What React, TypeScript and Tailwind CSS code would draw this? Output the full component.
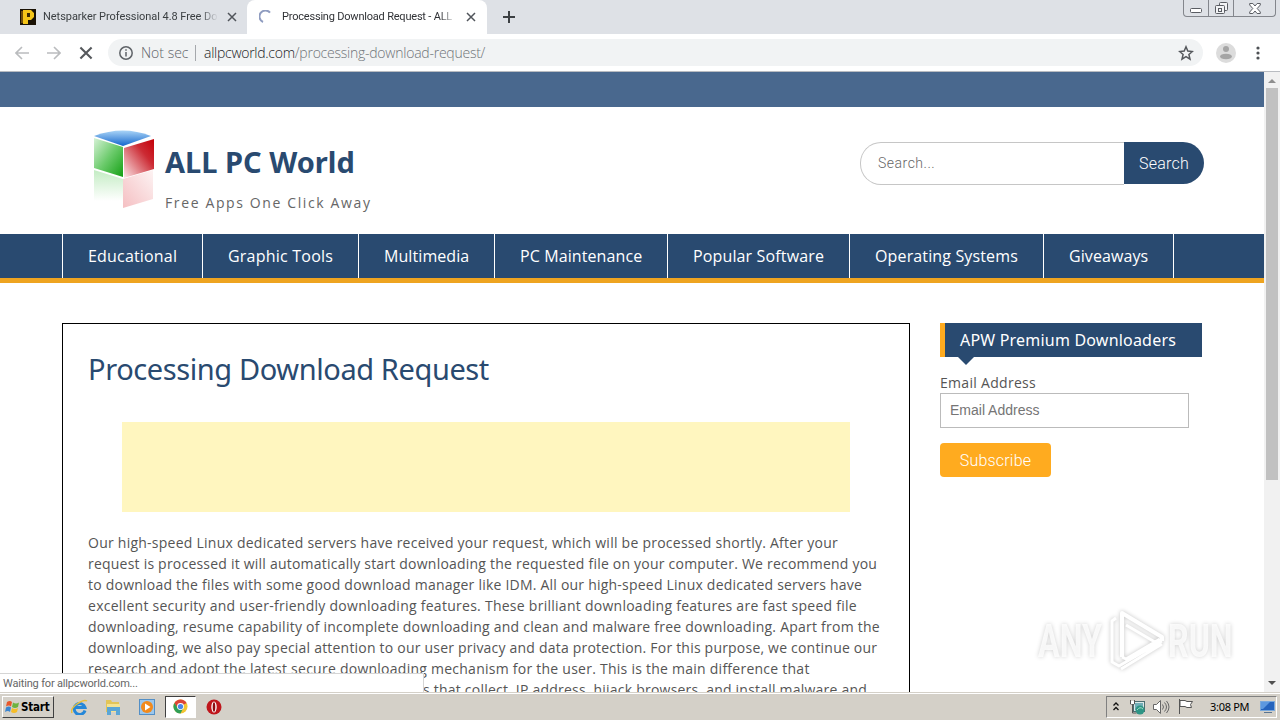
const navItems = [
  { label: "Educational", width: "w-[140px]", tracking: "tracking-[0.18px]" },
  { label: "Graphic Tools", width: "w-[156px]", tracking: "tracking-[0.22px]" },
  { label: "Multimedia", width: "w-[136px]", tracking: "tracking-[0.08px]" },
  { label: "PC Maintenance", width: "w-[173px]", tracking: "tracking-[0.1px]" },
  { label: "Popular Software", width: "w-[182px]", tracking: "tracking-[0.14px]" },
  { label: "Operating Systems", width: "w-[194px]", tracking: "tracking-[0.14px]" },
  { label: "Giveaways", width: "w-[130px]", tracking: "tracking-[0.08px]" },
];

const lines = [
  { text: "Our high-speed Linux dedicated servers have received your request, which will be processed shortly. After your", cls: "tracking-[0.245px]" },
  { text: "request is processed it will automatically start downloading the requested file on your computer. We recommend you", cls: "tracking-[0.217px]" },
  { text: "to download the files with some good download manager like IDM. All our high-speed Linux dedicated servers have", cls: "tracking-[0.22px]" },
  { text: "excellent security and user-friendly downloading features. These brilliant downloading features are fast speed file", cls: "tracking-[0.265px]" },
  { text: "downloading, resume capability of incomplete downloading and clean and malware free downloading. Apart from the", cls: "tracking-[0.238px]" },
  { text: "downloading, we also pay special attention to our user privacy and data protection. For this purpose, we continue our", cls: "tracking-[0.206px]" },
  { text: "research and adopt the latest secure downloading mechanism for the user. This is the main difference that", cls: "tracking-[0.25px]" },
];

function CloseIcon({ className }: { className: string }) {
  return (
    <svg viewBox="0 0 10 10" className={className} fill="none" stroke="currentColor">
      <path d="M1 1l8 8M9 1l-8 8" strokeWidth="1.5" />
    </svg>
  );
}

function TabStrip() {
  return (
    <div className="flex h-[34px] bg-[#dee1e6] font-['Roboto',sans-serif] text-[11px] text-[#3c4043]">
      <div className="flex h-[34px] w-[247px] items-center pl-5">
        <svg width="16" height="16" viewBox="0 0 16 16" className="shrink-0">
          <rect width="16" height="16" fill="#1a1205" />
          <path d="M3 1h8l3 3v4l-3 3H8v4H3V1z" fill="#f5c518" />
          <path d="M7 4h3v4H7z" fill="#3a2a05" />
          <path d="M2 2v12" stroke="#c98a10" />
        </svg>
        <div className="ml-[7px] w-[175px] overflow-hidden whitespace-nowrap tracking-[-0.05px] [mask-image:linear-gradient(to_right,black_90%,transparent)]">
          Netsparker Professional 4.8 Free Do
        </div>
        <CloseIcon className="ml-[9px] size-[10px] text-[#50545a]" />
      </div>
      <div className="flex h-[34px] w-[240px] items-center rounded-t-lg bg-white pl-3">
        <svg width="14" height="14" viewBox="0 0 14 14" fill="none" className="shrink-0">
          <path d="M4 12A6 6 0 1 1 11 2.6" stroke="#8f9cc0" strokeWidth="2" />
        </svg>
        <div className="ml-[9px] w-[175px] overflow-hidden whitespace-nowrap tracking-[-0.2px] text-[#303236] [mask-image:linear-gradient(to_right,black_90%,transparent)]">
          Processing Download Request - ALL
        </div>
        <CloseIcon className="ml-[9px] size-[10px] text-[#50545a]" />
      </div>
      <svg width="12" height="12" viewBox="0 0 12 12" className="ml-4 mt-[11px]" stroke="#3c4043" strokeWidth="2">
        <path d="M6 0v12M0 6h12" />
      </svg>
      <div className="ml-auto mr-1 flex h-[17px] w-[93px] rounded-b border border-t-0 border-[#83868c]">
        <div className="flex w-[25px] items-center justify-center border-r border-[#83868c]">
          <svg width="13" height="17" viewBox="0 0 13 17" fill="#fff" stroke="#5a5d63">
            <rect x=".5" y="8.500" width="11" height="4" rx="1" />
          </svg>
        </div>
        <div className="flex w-[25px] items-center justify-center border-r border-[#83868c]">
          <svg width="13" height="14" viewBox="0 0 13 14" fill="#f2f3f5" stroke="#5a5d63">
            <rect x="4.500" y="1.500" width="8" height="8" rx="1" />
            <rect x=".5" y="4.500" width="9" height="8" rx="1" />
            <rect x="3.500" y="7.500" width="3" height="3" />
          </svg>
        </div>
        <div className="flex flex-1 items-center justify-center">
          <svg width="12" height="11" viewBox="0 0 12 11" fill="#fff" stroke="#5a5d63">
            <path d="M.7.5h3.200L6 3 8.100.5h3.200v1.500L8.200 5.500l3.100 3.500v1.500H8.100L6 8l-2.100 2.500H.7V9l3.100-3.500L.7 2z" />
          </svg>
        </div>
      </div>
    </div>
  );
}

function Toolbar() {
  return (
    <div className="flex h-[38px] items-center border-b border-[#b9bcc1] bg-white pl-[15px] pr-[14px] font-['Open_Sans',sans-serif] text-[14px] font-light">
      <svg width="14" height="14" viewBox="0 0 14 14" fill="none" stroke="#babcbe" strokeWidth="1.600">
        <path d="M14 7H1M7 1L1 7l6 6" />
      </svg>
      <svg width="14" height="14" viewBox="0 0 14 14" fill="none" stroke="#babcbe" strokeWidth="1.600" className="ml-[18px]">
        <path d="M0 7h13M7 1l6 6-6 6" />
      </svg>
      <CloseIcon className="ml-[18px] size-[14px] text-[#55585c]" />
      <div className="ml-[15px] flex h-[27px] w-[1095px] items-center rounded-full bg-[#f1f3f4] pl-[11px] pr-[9px]">
        <svg width="14" height="14" viewBox="0 0 14 14" fill="none" stroke="#5f6368" strokeWidth="1.500">
          <circle cx="7" cy="7" r="6.200" />
          <path d="M7 6v4.500M7 3.200v1.600" />
        </svg>
        <span className="ml-2 w-[46px] whitespace-nowrap text-[#5f6368]">Not sec</span>
        <span className="ml-2 h-4 w-px bg-[#a5a8ac]" />
        <span className="ml-2 whitespace-nowrap tracking-[-0.27px] text-[#202124]">allpcworld.com</span>
        <span className="whitespace-nowrap tracking-[-0.24px] text-[#6f7378]">/processing-download-request/</span>
        <svg width="16" height="16" viewBox="0 0 16 16" className="ml-auto" fill="none" stroke="#55585c" strokeWidth="1.500">
          <path d="M8 1.800l1.800 4.300 4.600.4-3.500 3 1.100 4.600L8 11.700l-4 2.400 1.100-4.600-3.500-3 4.600-.4z" />
        </svg>
      </div>
      <svg width="20" height="20" viewBox="0 0 20 20" className="ml-[13px]">
        <circle cx="10" cy="10" r="10" fill="#dcdcdc" />
        <circle cx="10" cy="6" r="3" fill="#a5a5a5" />
        <ellipse cx="10" cy="13.500" rx="6" ry="2.800" fill="#a5a5a5" />
      </svg>
      <svg width="4" height="14" viewBox="0 0 4 14" className="ml-auto mr-[6px]" fill="#4e5155">
        <circle cx="2" cy="2" r="1.600" />
        <circle cx="2" cy="7" r="1.600" />
        <circle cx="2" cy="12" r="1.600" />
      </svg>
    </div>
  );
}

function SiteLogo() {
  return (
    <svg width="62" height="80" viewBox="0 0 62 80" className="mt-px">
      <defs>
        <linearGradient id="top" x1="0" y1="0" x2="0" y2="1">
          <stop offset="0" stopColor="#a9d4f7" />
          <stop offset="1" stopColor="#1466cc" />
        </linearGradient>
        <linearGradient id="left" x1="0" y1="0" x2="1" y2="1">
          <stop offset="0" stopColor="#d6f2d6" />
          <stop offset=".5" stopColor="#6ccb6c" />
          <stop offset="1" stopColor="#14a014" />
        </linearGradient>
        <linearGradient id="right" x1="1" y1="0" x2="0" y2="1">
          <stop offset="0" stopColor="#c40008" />
          <stop offset=".35" stopColor="#cc2b34" />
          <stop offset="1" stopColor="#fbe6e8" />
        </linearGradient>
        <linearGradient id="fadeLeft" x1="0" y1="0" x2="0" y2="1">
          <stop offset="0" stopColor="#c3ecc3" />
          <stop offset="1" stopColor="#fff" />
        </linearGradient>
        <linearGradient id="fadeRight" x1="1" y1="0" x2="0" y2="1">
          <stop offset="0" stopColor="#fdf3f3" />
          <stop offset="1" stopColor="#f5bfc2" />
        </linearGradient>
      </defs>
      <path d="M1 6Q30-5 58 6L30 16z" fill="url(#top)" />
      <path d="M1 8l29 9v30L1 38z" fill="url(#left)" />
      <path d="M31 18l30-9v30l-30 9z" fill="url(#right)" />
      <path d="M1 40l29 9v22L1 71z" fill="url(#fadeLeft)" />
      <path d="M30 49l30-9v29l-30 9z" fill="url(#fadeRight)" />
    </svg>
  );
}

function Header() {
  return (
    <header className="flex h-[127px] shrink-0 items-start bg-white pl-[93px] pt-[22px]">
      <SiteLogo />
      <div className="ml-[10px] whitespace-nowrap text-[#294a70]">
        <h1 className="mt-[9px] text-[29px] font-bold leading-[48px] font-['Noto_Sans',sans-serif]">ALL PC World</h1>
        <p className="mt-[6px] text-[14px] leading-[22px] tracking-[1.62px] text-[#666]">Free Apps One Click Away</p>
      </div>
      <form className="ml-auto mr-[60px] mt-[13px] flex h-[43px] w-[344px] font-['Roboto',sans-serif] font-light">
        <span className="flex-1 rounded-l-[21px] border border-r-0 border-[#c6c6c6] pl-[17px] pt-[10px] text-[14px] leading-5 tracking-[0.5px] text-[#666]">Search...</span>
        <span className="h-[42px] w-[80px] rounded-r-[21px] bg-[#294a70] text-center text-[16px] leading-[43px] tracking-[0.2px] text-white">Search</span>
      </form>
    </header>
  );
}

function Nav() {
  return (
    <nav className="flex h-[49px] shrink-0 border-b-[5px] border-[#eea420] bg-[#294a70] pl-[62px] text-[16px] leading-[44px] text-white">
      {navItems.map((item) => (
        <div key={item.label} className={`${item.width} ${item.tracking} whitespace-nowrap border-l border-white pl-[25px]`}>
          {item.label}
        </div>
      ))}
      <div className="w-px bg-white" />
    </nav>
  );
}

function Article() {
  return (
    <article className="h-[420px] w-[848px] border border-black bg-white px-[25px] pt-[19px]">
      <h2 className="whitespace-nowrap font-['Noto_Sans',sans-serif] text-[29px] leading-[52px] tracking-[-0.4px] text-[#294a70]">
        Processing Download Request
      </h2>
      <div className="ml-[34px] mt-[27px] h-[90px] w-[728px] bg-[#fff6bf]" />
      <div className="mt-5 whitespace-nowrap text-[14px] leading-[21px] text-[#555]">
        {lines.map((line) => (
          <div key={line.text} className={line.cls}>{line.text}</div>
        ))}
        {/* start of this line sits under the status bubble */}
        <div className="pl-[335px] tracking-[0.22px]">s that collect, IP address, hijack browsers, and install malware and</div>
      </div>
    </article>
  );
}

function Sidebar() {
  return (
    <aside className="ml-[30px] w-[262px] text-[14px] text-[#555]">
      <div className="relative h-[34px] border-l-[5px] border-[#ffab1f] bg-[#294a70] pl-[15px]">
        <h3 className="whitespace-nowrap font-['Noto_Sans',sans-serif] text-[16px] leading-[34px] tracking-[0.2px] text-white">APW Premium Downloaders</h3>
        <svg width="16" height="8" viewBox="0 0 16 8" className="absolute left-[13px] top-[34px]">
          <path d="M0 0h16L8 8z" fill="#294a70" />
        </svg>
      </div>
      <div className="mt-[15px] leading-[21px] tracking-[0.3px]">Email Address</div>
      <div className="h-[35px] w-[249px] border border-[#bbb] pl-[9px] font-['Liberation_Sans',sans-serif] text-[14px] leading-[33px] text-[#757575]">
        Email Address
      </div>
      <div className="mt-[15px] h-[34px] w-[111px] rounded-sm bg-[#ffab1f] text-center font-['Roboto',sans-serif] text-[16px] font-light leading-[35px] tracking-[0.2px] text-white">
        Subscribe
      </div>
    </aside>
  );
}

function Scrollbar() {
  return (
    <div className="flex w-4 flex-col items-center bg-[#f1f1f1]">
      <svg width="16" height="16" viewBox="0 0 16 16" fill="#8e8e8e">
        <path d="M4 11l4-4 4 4z" />
      </svg>
      <div className="h-[392px] w-3 bg-[#c1c1c1]" />
      <svg width="16" height="16" viewBox="0 0 16 16" className="mt-auto" fill="#505050">
        <path d="M4 5l4 4 4-4z" />
      </svg>
    </div>
  );
}

function Watermark() {
  return (
    <div className="absolute left-[1038px] top-[535px] flex h-[68px] items-center whitespace-nowrap font-['Liberation_Sans_Narrow','Roboto',sans-serif] text-[46px] font-bold leading-none text-white/80 [filter:drop-shadow(0_0_2px_#c4c4c4)]">
      <span className="inline-block w-[66px] origin-left scale-x-[0.7]">ANY</span>
      <svg width="62" height="66" viewBox="0 0 62 66" fill="none" stroke="#fff" strokeWidth="4" strokeLinejoin="round">
        <path d="M18 49V5l40 24v4" />
        <path d="M12 10L8 13v41l7 4 43-25M18 49l4 2 34-20M17 61l41-25M22 17l34 20" strokeWidth="3" />
      </svg>
      <span className="ml-[2px] inline-block w-[64px] origin-left scale-x-[0.7]">RUN</span>
    </div>
  );
}

function Taskbar() {
  return (
    <div className="flex h-7 items-center border-t border-[#d4d0c8] bg-[#d4d0c8] shadow-[inset_0_1px_0_#fff]">
      <div className="ml-[2px] flex h-[22px] w-[52px] items-center border border-b-[#404040] border-l-white border-r-[#404040] border-t-white pl-[2px] font-['DejaVu_Sans_Condensed','DejaVu_Sans',sans-serif] text-[11.5px] font-bold tracking-[-0.2px] text-black">
        <svg width="15" height="14" viewBox="0 0 15 14" className="mr-px shrink-0">
          <path d="M2 2q3-2 5 0L6 6.500q-2-2-5 0z" fill="#e8572a" />
          <path d="M8 2.500q3 2 6 0L13 7q-3 2-6 0z" fill="#6db33f" />
          <path d="M1 7.500q3-2 5 0L5 12q-2-2-5 0z" fill="#3a85d0" />
          <path d="M7 8q3 2 6 0l-1 4q-3 2-6 0z" fill="#f6bd27" />
        </svg>
        <span className="pt-[2px]">Start</span>
      </div>
      <svg width="17" height="16" viewBox="0 0 17 16" className="ml-[17px]" fill="none">
        <path d="M14 11.500A5.500 5.500 0 1 1 14 8.500H4" stroke="#2587d8" strokeWidth="3" />
        <path d="M1 14Q-1 10 6 5T16 2" stroke="#e9bf3c" strokeWidth="1.500" />
      </svg>
      <svg width="16" height="16" viewBox="0 0 16 16" className="ml-[17px]">
        <path d="M1 1h5l1 2h7v10H1z" fill="#e3c558" />
        <path d="M2 5h13v8H2z" fill="#f5e392" />
        <path d="M2 8h13v8h-4v-4H6v4H2z" fill="#5ba6d6" />
      </svg>
      <svg width="16" height="16" viewBox="0 0 16 16" className="ml-[18px]">
        <rect x=".5" y=".5" width="15" height="15" fill="#9cc7ec" stroke="#538fc6" />
        <circle cx="8" cy="8" r="6" fill="#f28a1c" />
        <path d="M6 4.500L11.500 8 6 11.500z" fill="#fff" />
      </svg>
      <div className="ml-[10px] flex h-[22px] w-[31px] items-center justify-center border border-b-white border-l-[#404040] border-r-white border-t-[#404040] bg-white">
        <svg width="15" height="15" viewBox="0 0 16 16">
          <circle cx="8" cy="8" r="7.500" fill="#f3c532" />
          <path d="M1.500 4.250A7.500 7.500 0 0 1 14.500 4.250L8 8H3.700z" fill="#dc4437" />
          <path d="M1.500 4.250A7.500 7.500 0 0 0 8 15.500L11 9.700 8 8 5 9.700z" fill="#2f9e56" />
          <circle cx="8" cy="8" r="3.700" fill="#fff" />
          <circle cx="8" cy="8" r="2.800" fill="#4a86e8" />
        </svg>
      </div>
      <svg width="16" height="16" viewBox="0 0 16 16" className="ml-[10px]">
        <circle cx="8" cy="8" r="7.500" fill="#bf161c" />
        <ellipse cx="8" cy="8" rx="2.700" ry="5.500" fill="#fff" />
        <ellipse cx="8" cy="8" rx="1.300" ry="4.700" fill="#8e0c11" />
      </svg>
      <div className="ml-auto mr-[3px] flex h-[22px] w-[171px] items-center border border-b-white border-l-[#808080] border-r-white border-t-[#808080] font-['Noto_Sans',sans-serif] text-[11px] text-black">
        <svg width="6" height="9" viewBox="0 0 6 9" className="ml-[6px]" fill="none" stroke="#111" strokeWidth="1.300">
          <path d="M.5 3.500L3 1l2.500 2.500M.5 8L3 5.500 5.500 8" />
        </svg>
        <svg width="17" height="16" viewBox="0 0 17 16" className="ml-[10px]">
          <rect x="4.500" y="2.500" width="11" height="10" fill="#dbe8e8" stroke="#4b6d70" />
          <rect x="6" y="4" width="8" height="7" fill="#71aeb7" />
          <circle cx="11" cy="11" r="4.500" fill="#2e9585" />
          <path d="M8 11q3-4 6-1" stroke="#a3ddc7" fill="none" />
          <path d="M1.500 1v4h4V1M3.500 5v9h4" fill="none" stroke="#555" />
          <path d="M2 2h3v3H2z" fill="#fff" />
        </svg>
        <svg width="17" height="14" viewBox="0 0 17 14" className="ml-[7px]" fill="#fff" stroke="#666">
          <path d="M.5 4.500h3l4-4v13l-4-4h-3z" />
          <path d="M9.500 4.500q2 2.500 0 5M11.500 2.500q4 4.500 0 9M13.500 1q5 6 0 12" fill="none" />
        </svg>
        <svg width="16" height="15" viewBox="0 0 16 15" className="ml-[8px]" fill="#fff" stroke="#555">
          <path d="M1.500 0v15M2 1.500h5l2 1h5.500l-2 3 1 3H9l-2-1H2z" />
        </svg>
        <span className="ml-[16px] whitespace-nowrap pt-px tracking-[-0.3px]">3:08 PM</span>
        <svg width="16" height="14" viewBox="0 0 16 14" className="ml-auto">
          <rect x=".5" y="1.500" width="14" height="9" fill="#2563bd" stroke="#79a8dc" />
          <path d="M1 2h9L3 9H1z" fill="#5d98df" />
          <path d="M4 12.500h8" stroke="#597491" />
        </svg>
      </div>
    </div>
  );
}

export default function App() {
  return (
    <div className="flex h-[720px] w-[1280px] flex-col overflow-hidden bg-white font-['Open_Sans',sans-serif]">
      <TabStrip />
      <Toolbar />
      <div className="relative flex h-[620px] overflow-hidden">
        <div className="flex flex-1 flex-col overflow-hidden">
          <div className="h-[35px] shrink-0 bg-[#49688e]" />
          <Header />
          <Nav />
          <main className="flex pl-[62px] pt-10">
            <Article />
            <Sidebar />
          </main>
        </div>
        <Scrollbar />
        <Watermark />
        {/* page load status */}
        <div className="absolute bottom-0 left-0 h-[19px] w-[424px] whitespace-nowrap border-r border-t border-[#d5d5d5] bg-white pl-[3px] font-['Roboto',sans-serif] text-[11px] leading-[19px] tracking-[-0.17px] text-[#666]">
          Waiting for allpcworld.com...
        </div>
      </div>
      <Taskbar />
    </div>
  );
}
